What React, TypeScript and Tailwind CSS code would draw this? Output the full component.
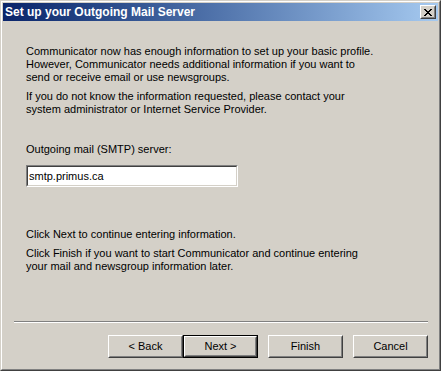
import React from "react";

const font = { fontFamily: '"Liberation Sans", Arial, sans-serif' };

function Button({ label, isDefault }: { label: string; isDefault?: boolean }) {
  const face = (
    <div className="h-full w-full border border-t-white border-l-white border-r-[#404040] border-b-[#404040]">
      <div className="flex h-full w-full items-center justify-center border border-t-[#d4d0c8] border-l-[#d4d0c8] border-r-[#808080] border-b-[#808080] text-[11px] text-black">
        {label}
      </div>
    </div>
  );
  return (
    <div className="h-[23px] w-[75px]">
      {isDefault ? (
        <div className="h-full w-full border border-black">{face}</div>
      ) : (
        face
      )}
    </div>
  );
}

export default function App() {
  return (
    <div
      className="h-[371px] w-[441px] border border-t-[#d4d0c8] border-l-[#d4d0c8] border-r-[#404040] border-b-[#404040] bg-[#d4d0c8]"
      style={font}
    >
      <div className="flex h-full w-full flex-col border border-t-white border-l-white border-r-[#808080] border-b-[#808080] p-px">
        {/* Title bar */}
        <div className="flex h-[18px] items-center justify-between bg-gradient-to-r from-[#0a246a] to-[#a6caf0] pl-[2px] pr-[2px]">
          <span className="text-[12px] font-bold leading-none text-white">
            Set up your Outgoing Mail Server
          </span>
          <div className="h-[14px] w-[16px] border border-t-white border-l-white border-r-[#404040] border-b-[#404040] bg-[#d4d0c8]">
            <div className="flex h-full w-full items-center justify-center border border-t-[#d4d0c8] border-l-[#d4d0c8] border-r-[#808080] border-b-[#808080]">
              <svg width="8" height="7" viewBox="0 0 8 7" shapeRendering="crispEdges">
                <path
                  d="M0 0h2v1H0zM6 0h2v1H6zM1 1h2v1H1zM5 1h2v1H5zM2 2h4v1H2zM3 3h2v1H3zM2 4h4v1H2zM1 5h2v1H1zM5 5h2v1H5zM0 6h2v1H0zM6 6h2v1H6z"
                  fill="#000"
                />
              </svg>
            </div>
          </div>
        </div>

        {/* Body */}
        <div className="flex flex-1 flex-col text-[11px] leading-[13px] text-black">
          <div className="pl-[23px] pt-[24px]">
            <p>
              Communicator now has enough information to set up your basic profile.
              <br />
              However, Communicator needs additional information if you want to
              <br />
              send or receive email or use newsgroups.
            </p>
            <p className="mt-[6px]">
              If you do not know the information requested, please contact your
              <br />
              system administrator or Internet Service Provider.
            </p>
            <p className="mt-[27px]">Outgoing mail (SMTP) server:</p>
            <div className="mt-[9px] h-[22px] w-[212px] border border-t-[#808080] border-l-[#808080] border-r-white border-b-white">
              <div className="flex h-full w-full items-center border border-t-[#404040] border-l-[#404040] border-r-[#d4d0c8] border-b-[#d4d0c8] bg-white pl-[1px]">
                smtp.primus.ca
              </div>
            </div>
            <p className="mt-[41px]">Click Next to continue entering information.</p>
            <p className="mt-[6px]">
              Click Finish if you want to start Communicator and continue entering
              <br />
              your mail and newsgroup information later.
            </p>
          </div>

          <div className="mt-auto pl-[11px] pr-[10px]">
            <div className="border-t border-b border-t-[#808080] border-b-white" />
          </div>
          <div className="flex justify-end pb-[10px] pr-[10px] pt-[12px]">
            <Button label="< Back" />
            <Button label="Next >" isDefault />
            <div className="w-[10px]" />
            <Button label="Finish" />
            <div className="w-[10px]" />
            <Button label="Cancel" />
          </div>
        </div>
      </div>
    </div>
  );
}
